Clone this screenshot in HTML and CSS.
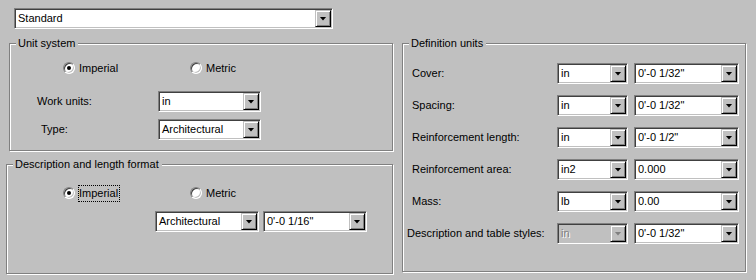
FILE: index.html
```html
<!DOCTYPE html>
<html lang="en">
<head>
    <meta charset="UTF-8">
    <title>Units</title>
    <link rel="stylesheet" href="styles.css">
</head>
<body>
    <div class="dialog">
        <div class="top">
            <div class="combo combo-standard">
                <span class="combo-text">Standard</span>
                <span class="combo-btn"></span>
            </div>
        </div>

        <div class="columns">
            <div class="left-col">
                <div class="group group-units">
                    <span class="legend">Unit system</span>
                    <div class="radios radios-units">
                        <label class="radio-item">
                            <span class="radio checked"></span>
                            <span>Imperial</span>
                        </label>
                        <label class="radio-item">
                            <span class="radio"></span>
                            <span>Metric</span>
                        </label>
                    </div>
                    <div class="field-row field-work">
                        <span class="field-label">Work units:</span>
                        <div class="combo combo-unit-sys">
                            <span class="combo-text">in</span>
                            <span class="combo-btn"></span>
                        </div>
                    </div>
                    <div class="field-row field-type">
                        <span class="field-label label-type">Type:</span>
                        <div class="combo combo-unit-sys">
                            <span class="combo-text">Architectural</span>
                            <span class="combo-btn"></span>
                        </div>
                    </div>
                </div>

                <div class="group group-format">
                    <span class="legend">Description and length format</span>
                    <div class="radios radios-format">
                        <label class="radio-item">
                            <span class="radio checked"></span>
                            <span class="focus">Imperial</span>
                        </label>
                        <label class="radio-item">
                            <span class="radio"></span>
                            <span>Metric</span>
                        </label>
                    </div>
                    <div class="format-combos">
                        <div class="combo combo-format">
                            <span class="combo-text">Architectural</span>
                            <span class="combo-btn"></span>
                        </div>
                        <div class="combo combo-format">
                            <span class="combo-text">0'-0 1/16"</span>
                            <span class="combo-btn"></span>
                        </div>
                    </div>
                </div>
            </div>

            <div class="group group-defs">
                <span class="legend">Definition units</span>
                <div class="def-rows">
                    <div class="def-row">
                        <span class="def-label">Cover:</span>
                        <div class="combo combo-unit"><span class="combo-text">in</span><span class="combo-btn"></span></div>
                        <div class="combo combo-value"><span class="combo-text">0'-0 1/32"</span><span class="combo-btn"></span></div>
                    </div>
                    <div class="def-row">
                        <span class="def-label">Spacing:</span>
                        <div class="combo combo-unit"><span class="combo-text">in</span><span class="combo-btn"></span></div>
                        <div class="combo combo-value"><span class="combo-text">0'-0 1/32"</span><span class="combo-btn"></span></div>
                    </div>
                    <div class="def-row">
                        <span class="def-label">Reinforcement length:</span>
                        <div class="combo combo-unit"><span class="combo-text">in</span><span class="combo-btn"></span></div>
                        <div class="combo combo-value"><span class="combo-text">0'-0 1/2"</span><span class="combo-btn"></span></div>
                    </div>
                    <div class="def-row">
                        <span class="def-label">Reinforcement area:</span>
                        <div class="combo combo-unit"><span class="combo-text">in2</span><span class="combo-btn"></span></div>
                        <div class="combo combo-value"><span class="combo-text">0.000</span><span class="combo-btn"></span></div>
                    </div>
                    <div class="def-row">
                        <span class="def-label">Mass:</span>
                        <div class="combo combo-unit"><span class="combo-text">lb</span><span class="combo-btn"></span></div>
                        <div class="combo combo-value"><span class="combo-text">0.00</span><span class="combo-btn"></span></div>
                    </div>
                    <div class="def-row">
                        <span class="def-label label-wide">Description and table styles:</span>
                        <div class="combo combo-unit disabled"><span class="combo-text">in</span><span class="combo-btn"></span></div>
                        <div class="combo combo-value"><span class="combo-text">0'-0 1/32"</span><span class="combo-btn"></span></div>
                    </div>
                </div>
            </div>
        </div>
    </div>
</body>
</html>
```

FILE: styles.css
```css
:root {
    --face: #c0c0c0;
    --shadow: #808080;
    --dark: #404040;
    --light: #ffffff;
}

* {
    margin: 0;
    padding: 0;
    box-sizing: border-box;
}

body {
    width: 756px;
    height: 280px;
    overflow: hidden;
    background: var(--face);
    color: #000;
    font-family: "Liberation Sans", Arial, sans-serif;
    font-size: 11px;
    line-height: 13px;
}

.dialog {
    padding-top: 8px;
}

.top {
    padding-left: 14px;
}

/* combo box */
.combo {
    display: flex;
    height: 21px;
    padding: 1px;
    background: #fff;
    border: 1px solid;
    border-color: var(--shadow) var(--light) var(--light) var(--shadow);
    box-shadow: inset 1px 1px 0 var(--dark), inset -1px -1px 0 var(--face);
}

.combo-text {
    flex: 1;
    padding-left: 2px;
    line-height: 17px;
    white-space: nowrap;
    overflow: hidden;
}

.combo-btn {
    width: 16px;
    height: 17px;
    display: flex;
    align-items: center;
    justify-content: center;
    background: var(--face);
    border: 1px solid;
    border-color: var(--face) #000 #000 var(--face);
    box-shadow: inset 1px 1px 0 var(--light), inset -1px -1px 0 var(--shadow);
}

.combo-btn::after {
    content: "";
    width: 7px;
    height: 4px;
    background: #000;
    clip-path: polygon(0 0, 100% 0, 50% 100%);
}

.combo.disabled {
    background: var(--face);
}

.combo.disabled .combo-text {
    color: var(--shadow);
    text-shadow: 1px 1px 0 var(--light);
}

.combo.disabled .combo-btn::after {
    background: var(--shadow);
    filter: drop-shadow(1px 1px 0 var(--light));
}

.combo-standard {
    width: 319px;
}

/* layout */
.columns {
    display: flex;
    align-items: flex-start;
    margin-top: 14px;
}

.left-col {
    display: flex;
    flex-direction: column;
    align-items: flex-start;
    width: 387px;
    margin-left: 6px;
}

/* group box */
.group {
    position: relative;
    border: 1px solid var(--shadow);
    box-shadow: inset 1px 1px 0 var(--light), 1px 1px 0 var(--light);
}

.legend {
    position: absolute;
    top: -7px;
    left: 6px;
    padding: 0 3px 0 2px;
    background: var(--face);
    white-space: nowrap;
}

.group-units {
    width: 384px;
    height: 108px;
    margin-left: 3px;
}

.group-format {
    width: 387px;
    height: 110px;
    margin-top: 13px;
}

.group-defs {
    width: 344px;
    height: 229px;
    margin-left: 9px;
}

/* radios */
.radios {
    display: flex;
    height: 16px;
    align-items: center;
}

.radios-units {
    margin-top: 16px;
    padding-left: 53px;
}

.radios-format {
    margin-top: 20px;
    padding-left: 56px;
}

.radio-item {
    display: flex;
    align-items: center;
    gap: 4px;
    width: 127px;
}

.radio {
    position: relative;
    width: 12px;
    height: 12px;
    border-radius: 50%;
    background: #fff;
    border: 1px solid;
    border-color: var(--shadow) var(--light) var(--light) var(--shadow);
    box-shadow: inset 1px 1px 0 var(--dark), inset -1px -1px 0 var(--face);
}

.radio.checked::after {
    content: "";
    position: absolute;
    left: 3px;
    top: 3px;
    width: 4px;
    height: 4px;
    border-radius: 50%;
    background: #000;
}

.focus {
    margin-left: -1px;
    padding: 1px 1px 1px 0;
    border: 1px dotted #000;
}

/* unit system fields */
.field-row {
    display: flex;
    align-items: center;
    padding-left: 27px;
}

.field-work {
    margin-top: 15px;
}

.field-type {
    margin-top: 7px;
}

.field-label {
    width: 121px;
}

.label-type {
    padding-left: 4px;
}

.combo-unit-sys {
    width: 103px;
}

/* description format */
.format-combos {
    display: flex;
    gap: 4px;
    margin-top: 10px;
    padding-left: 148px;
}

.combo-format {
    width: 104px;
}

/* definition units */
.def-rows {
    display: flex;
    flex-direction: column;
    gap: 11px;
    padding: 19px 0 0 9px;
}

.def-row {
    display: flex;
    align-items: center;
    height: 21px;
}

.def-label {
    width: 145px;
    white-space: nowrap;
}

.label-wide {
    width: 150px;
    margin-left: -5px;
}

.combo-unit {
    width: 71px;
    margin-right: 6px;
}

.combo-value {
    width: 105px;
}
```
